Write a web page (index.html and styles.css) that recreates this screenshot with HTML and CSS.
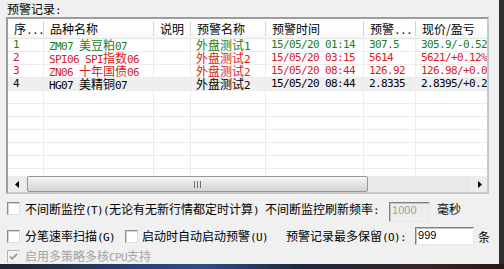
FILE: index.html
```html
<!DOCTYPE html>
<html lang="zh-CN">
<head>
  <meta charset="UTF-8">
  <title>预警记录</title>
  <link rel="stylesheet" href="styles.css">
</head>
<body>
  <div id="win">
    <div class="caption">预警记录<span class="a">:</span></div>

    <div id="list">
      <div class="head">
        <span>序<span class="a">...</span></span>
        <span>品种名称</span>
        <span>说明</span>
        <span>预警名称</span>
        <span>预警时间</span>
        <span>预警<span class="a">...</span></span>
        <span>现价/盈亏</span>
      </div>
      <div class="rows">
        <div class="row up">
          <span class="a">1</span>
          <span><span class="a">ZM07 </span>美豆粕<span class="a">07</span></span>
          <span></span>
          <span>外盘测试<span class="a">1</span></span>
          <span class="a">15/05/20 01:14</span>
          <span class="a">307.5</span>
          <span class="a">305.9/-0.52%</span>
        </div>
        <div class="row down">
          <span class="a">2</span>
          <span><span class="a">SPI06 SPI</span>指数<span class="a">06</span></span>
          <span></span>
          <span>外盘测试<span class="a">2</span></span>
          <span class="a">15/05/20 03:15</span>
          <span class="a">5614</span>
          <span class="a">5621/+0.12%</span>
        </div>
        <div class="row down">
          <span class="a">3</span>
          <span><span class="a">ZN06 </span>十年国债<span class="a">06</span></span>
          <span></span>
          <span>外盘测试<span class="a">2</span></span>
          <span class="a">15/05/20 08:44</span>
          <span class="a">126.92</span>
          <span class="a">126.98/+0.05%</span>
        </div>
        <div class="row sel">
          <span class="a">4</span>
          <span><span class="a">HG07 </span>美精铜<span class="a">07</span></span>
          <span></span>
          <span>外盘测试<span class="a">2</span></span>
          <span class="a">15/05/20 08:44</span>
          <span class="a">2.8335</span>
          <span class="a">2.8395/+0.21%</span>
        </div>
        <div class="row"><span></span><span></span><span></span><span></span><span></span><span></span><span></span></div>
        <div class="row"><span></span><span></span><span></span><span></span><span></span><span></span><span></span></div>
        <div class="row"><span></span><span></span><span></span><span></span><span></span><span></span><span></span></div>
        <div class="row"><span></span><span></span><span></span><span></span><span></span><span></span><span></span></div>
        <div class="row"><span></span><span></span><span></span><span></span><span></span><span></span><span></span></div>
        <div class="row"><span></span><span></span><span></span><span></span><span></span><span></span><span></span></div>
        <div class="row"><span></span><span></span><span></span><span></span><span></span><span></span><span></span></div>
      </div>
      <div class="hscroll">
        <div class="sb-btn left">
          <svg width="4" height="7" viewBox="0 0 4 7"><path d="M4 0 L0 3.5 L4 7 Z" fill="#000"/></svg>
        </div>
        <div class="sb-thumb">
          <svg width="7" height="7" viewBox="0 0 7 7"><path d="M0.5 0v7M3.5 0v7M6.5 0v7" stroke="#6f6f6f" stroke-width="1"/></svg>
        </div>
        <div class="sb-track"></div>
        <div class="sb-btn right">
          <svg width="4" height="7" viewBox="0 0 4 7"><path d="M0 0 L4 3.5 L0 7 Z" fill="#000"/></svg>
        </div>
      </div>
    </div>

    <div class="opts">
      <div class="opt r1">
        <span class="cb"></span>
        <span class="lbl">不间断监控<span class="a">(T)(</span>无论有无新行情都定时计算<span class="a">)</span></span>
        <span class="lbl gap6">不间断监控刷新频率<span class="a">:</span></span>
        <span class="fld off w41">1000</span>
        <span class="lbl gap7">毫秒</span>
      </div>
      <div class="opt r2">
        <span class="cb"></span>
        <span class="lbl">分笔速率扫描<span class="a">(G)</span></span>
        <span class="cb second"></span>
        <span class="lbl">启动时自动启动预警<span class="a">(U)</span></span>
        <span class="lbl gap18">预警记录最多保留<span class="a">(O):</span></span>
        <span class="fld w59">999</span>
        <span class="lbl gap4">条</span>
      </div>
      <div class="opt r3">
        <span class="cb checked">
          <svg width="11" height="11" viewBox="0 0 11 11"><path d="M2 5.5 L4.3 7.8 L9 3" fill="none" stroke="#9b9b9b" stroke-width="1.8"/></svg>
        </span>
        <span class="lbl dim">启用多策略多核<span class="a">CPU</span>支持</span>
      </div>
    </div>
  </div>
  <div id="strip"></div>
</body>
</html>
```

FILE: styles.css
```css
* { box-sizing: border-box; }
body {
  margin: 0;
  width: 504px;
  height: 269px;
  overflow: hidden;
  background: #f0f0f0;
  color: #000;
  font-family: "Noto Sans CJK SC", sans-serif;
  font-size: 12px;
  line-height: 12px;
}
/* latin runs: 6px per char like the old bitmap font */
.a {
  font-family: "DejaVu Sans Mono", monospace;
  font-size: 11px;
  letter-spacing: -0.62px;
}
#win {
  width: 504px;
  height: 264px;
  padding: 3px 0 0 6px;
  border-right: 5px solid #2d2d2d;
  display: flex;
  flex-direction: column;
}
.caption {
  height: 14px;
  padding-left: 1px;
  white-space: nowrap;
}
#list {
  width: 483px;
  height: 177px;
  border: 2px solid #a6a6a6;
  border-color: #9c9c9c #c9c9c9 #c9c9c9 #9c9c9c;
  background: #fff;
  display: flex;
  flex-direction: column;
  overflow: hidden;
}
.head, .row {
  display: grid;
  grid-template-columns: 36px 110px 37px 75px 98px 52px 90px;
}
.head {
  height: 20px;
  border-bottom: 1px solid #e5e5e5;
  background: linear-gradient(#fff, #fff 60%, #f6f7f9);
}
.head > span {
  padding-left: 6px;
  line-height: 19px;
  white-space: nowrap;
  overflow: hidden;
  background: linear-gradient(#d5d5d5, #d5d5d5) no-repeat right 2px / 1px 15px;
}
.rows {
  flex: 1;
  overflow: hidden;
}
.row {
  height: 13px;
  border-bottom: 1px solid #ececec;
}
.row > span {
  padding-left: 5px;
  white-space: nowrap;
  overflow: hidden;
  border-right: 1px solid #ececec;
}
.row.up { color: #1b7d1b; }
.row.down { color: #d61c1c; }
.row.sel { background: #efefef; }

.hscroll {
  height: 16px;
  display: flex;
  background: #e9e9e9;
}
.sb-btn {
  display: flex;
  align-items: center;
  justify-content: center;
  background: #ececec;
}
.sb-btn.left { width: 18px; }
.sb-btn.right { width: 17px; padding-left: 2px; }
.sb-thumb {
  width: 341px;
  margin: 0 0 0 1px;
  border: 1px solid #979797;
  border-radius: 2px;
  background: linear-gradient(#f6f6f6, #e4e4e4 50%, #d2d2d2);
  display: flex;
  align-items: center;
  justify-content: center;
}
.sb-track { flex: 1; }

.opts {
  padding: 8px 0 0 1px;
  display: flex;
  flex-direction: column;
}
.opt {
  display: flex;
  white-space: nowrap;
}
.r1 { height: 20px; align-items: flex-start; }
.r2 { height: 18px; margin-top: 5px; align-items: center; }
.r3 { height: 13px; margin-top: 5px; align-items: center; }

.cb {
  flex: none;
  width: 13px;
  height: 13px;
  margin-right: 5px;
  border: 1px solid;
  border-color: #8c8c8c #dedede #dedede #8c8c8c;
  background: #fff;
  box-shadow: inset 1px 1px 0 #d4d4d4;
}
.cb.second { margin-left: 10px; margin-right: 4px; }
.cb.checked {
  background: #f3f3f3;
  border-color: #b4b4b4 #e6e6e6 #e6e6e6 #b4b4b4;
  box-shadow: none;
  display: flex;
  align-items: center;
  justify-content: center;
}
.lbl { line-height: 13px; }
.dim { color: #a3a3a3; }
.gap4 { margin-left: 4px; }
.gap6 { margin-left: 6px; }
.gap7 { margin-left: 7px; }
.gap18 { margin-left: 18px; }

.fld {
  flex: none;
  display: block;
  padding: 1px 0 0 2px;
  border: 1px solid;
  border-color: #7f7f7f #e9e9e9 #e9e9e9 #7f7f7f;
  box-shadow: inset 1px 1px 0 #c4c4c4;
  background: #fff;
  font-family: "Liberation Sans", sans-serif;
  font-size: 11px;
  line-height: 12px;
}
.fld.off { background: #ededed; color: #a0a0a0; margin-left: 10px; }
.w41 { width: 41px; height: 20px; }
.w59 { width: 59px; height: 18px; margin-left: 9px; }

#strip {
  height: 5px;
  background: linear-gradient(90deg, #1d2330 0%, #27416a 25%, #2e4f82 40%, #1c2840 60%, #3a2326 85%, #281818 100%);
}
```
